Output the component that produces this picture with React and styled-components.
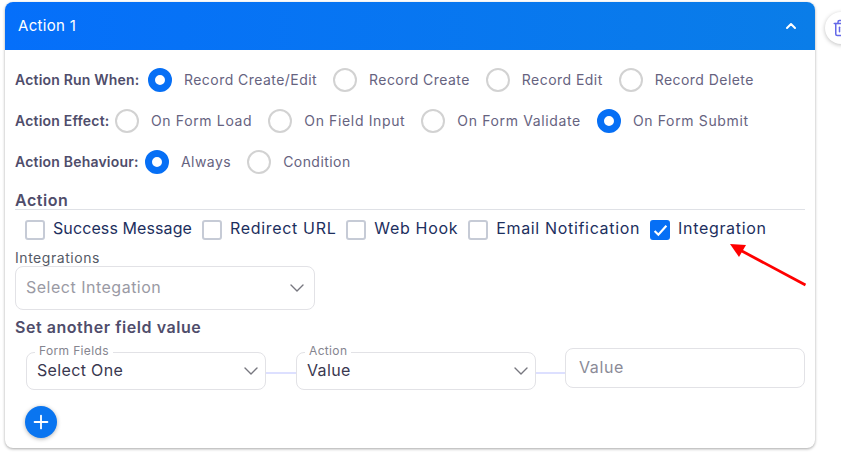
import React from "react";
import styled, { createGlobalStyle } from "styled-components";
import { ChevronDown, ChevronUp, Plus, Trash2 } from "lucide-react";

const Global = createGlobalStyle`
  html, body { margin:0; padding:0; background:#fff; overflow:hidden; }
  body { font-family:Inter, "Open Sans", sans-serif; }
  * { box-sizing:border-box; }
`;

const Page = styled.div`
  width:841px;
  height:453px;
  overflow:hidden;
  padding:2px 0 0 5px;
  display:flex;
  align-items:flex-start;
  gap:10px;
`;

const Card = styled.section`
  position:relative;
  flex:0 0 810px;
  height:446px;
  border-radius:8px;
  background:#fff;
  box-shadow:0 1px 3px rgba(0,0,0,.35);
`;

const CardHead = styled.header`
  height:48px;
  padding:0 16px 1px 13px;
  border-radius:8px 8px 0 0;
  background:linear-gradient(90deg,#056ffa,#0a7de8);
  color:#fff;
  display:flex;
  align-items:center;
  justify-content:space-between;
  font-size:15px;
  letter-spacing:.3px;
`;

const CardBody = styled.div`
  padding:18px 10px 0 10px;
`;

const RadioRow = styled.div`
  height:24px;
  margin-bottom:17px;
  display:flex;
  align-items:center;
  gap:16px;
  letter-spacing:${p => p.$ls}px;
`;

const RowLabel = styled.span`
  width:${p => p.$w}px;
  padding-bottom:2px;
  font-size:14px;
  font-weight:600;
  letter-spacing:.2px;
  color:#4f4d6b;
  white-space:nowrap;
`;

const RadioItem = styled.label`
  display:flex;
  align-items:center;
  gap:12px;
  font-size:14px;
  color:#66637f;
  white-space:nowrap;
`;

const RadioText = styled.span`
  padding-bottom:2px;
`;

const RadioDot = styled.span`
  width:24px;
  height:24px;
  border-radius:50%;
  background:#fff;
  border:${p => (p.$on ? "7px solid #066ff5" : "2px solid #d2d2d2")};
`;

const SectionTitle = styled.h3`
  margin:${p => p.$top}px 0 0;
  font-size:16px;
  font-weight:600;
  line-height:20px;
  letter-spacing:.55px;
  color:#4f4d6b;
`;

const ActionTitle = styled(SectionTitle)`
  border-bottom:1px solid #dfe1e6;
  height:20px;
`;

const CheckRow = styled.div`
  margin-top:10px;
  padding-left:10px;
  display:flex;
  align-items:center;
  gap:10px;
  height:20px;
`;

const CheckItem = styled.label`
  display:flex;
  align-items:center;
  gap:8px;
  font-size:16px;
  letter-spacing:${p => p.$ls ?? 0.67}px;
  color:#1d2f5e;
  white-space:nowrap;
`;

const CheckText = styled.span`
  padding-bottom:4px;
`;

const CheckBox = styled.span`
  width:20px;
  height:20px;
  border-radius:3px;
  border:2px solid ${p => (p.$on ? "#066ff5" : "#c6cbd6")};
  background:${p => (p.$on ? "#066ff5" : "#fff")};
  display:flex;
  align-items:center;
  justify-content:center;
`;

const FieldLabel = styled.div`
  margin-top:10px;
  font-size:14px;
  line-height:16px;
  letter-spacing:.55px;
  color:#555a66;
`;

const SelectBox = styled.div`
  position:relative;
  width:${p => p.$w}px;
  height:${p => p.$h}px;
  padding:0 ${p => p.$pr}px 0 10px;
  border:1px solid #e2e2e6;
  border-radius:8px;
  background:#fff;
  display:flex;
  align-items:center;
  justify-content:space-between;
  font-size:16px;
  letter-spacing:${p => (p.$muted ? 0.5 : 0.35)}px;
  color:${p => (p.$muted ? "#9a9aa4" : "#3a3850")};
  svg { color:#77777f; flex:none; }
`;

const SelectText = styled.span`
  padding-bottom:2px;
`;

const Legend = styled.span`
  position:absolute;
  left:8px;
  top:-9px;
  padding:0 4px;
  background:#fff;
  font-size:12px;
  line-height:14px;
  letter-spacing:.35px;
  color:#85858f;
`;

const FieldRow = styled.div`
  margin-top:15px;
  padding-left:11px;
  display:flex;
  align-items:flex-start;
`;

const Connector = styled.div`
  flex:none;
  width:${p => p.$w}px;
  height:2px;
  margin-top:20px;
  background:#dde0ff;
`;

const ValueInput = styled.input`
  width:240px;
  height:40px;
  padding:0 13px 3px;
  margin-top:-4px;
  border:1px solid #e2e2e6;
  border-radius:8px;
  outline:none;
  font:inherit;
  font-size:16px;
  letter-spacing:.6px;
  color:#3a3850;
  &::placeholder { color:#8b8b97; opacity:1; }
`;

const AddButton = styled.button`
  width:32px;
  height:32px;
  margin:16px 0 0 10px;
  padding:0;
  border:none;
  border-radius:50%;
  background:#0a75f0;
  color:#fff;
  box-shadow:0 1px 4px rgba(0,0,0,.3);
  display:flex;
  align-items:center;
  justify-content:center;
`;

const TrashButton = styled.button`
  flex:0 0 32px;
  width:32px;
  height:32px;
  margin-top:10px;
  padding:0;
  border:none;
  border-radius:50%;
  background:#fff;
  color:#6468e8;
  box-shadow:0 1px 4px rgba(0,0,0,.25);
  display:flex;
  align-items:center;
  justify-content:center;
`;

const Arrow = styled.svg`
  position:absolute;
  left:715px;
  top:236px;
`;

const Radio = ({ on, children }) => (
  <RadioItem><RadioDot $on={on} /><RadioText>{children}</RadioText></RadioItem>
);

const Check = ({ on, ls, children }) => (
  <CheckItem $ls={ls}>
    <CheckBox $on={on}>
      {on && (
        <svg width="15" height="13" viewBox="0 0 14 12" fill="none" stroke="#fff" strokeWidth="2">
          <path d="M1.5 6.5 5 10l7.5-8.5" />
        </svg>
      )}
    </CheckBox>
    <CheckText>{children}</CheckText>
  </CheckItem>
);

const Caret = () => <ChevronDown size={24} strokeWidth={1.4} />;

export default function App() {
  return (
    <Page>
      <Global />
      <Card>
        <CardHead>
          Action 1
          <ChevronUp size={16} strokeWidth={3} />
        </CardHead>
        <CardBody>
          <RadioRow $ls={0.45}>
            <RowLabel $w={117}>Action Run When:</RowLabel>
            <Radio on>Record Create/Edit</Radio>
            <Radio>Record Create</Radio>
            <Radio>Record Edit</Radio>
            <Radio>Record Delete</Radio>
          </RadioRow>
          <RadioRow $ls={0.64}>
            <RowLabel $w={84}>Action Effect:</RowLabel>
            <Radio>On Form Load</Radio>
            <Radio>On Field Input</Radio>
            <Radio>On Form Validate</Radio>
            <Radio on>On Form Submit</Radio>
          </RadioRow>
          <RadioRow $ls={0.45}>
            <RowLabel $w={114}>Action Behaviour:</RowLabel>
            <Radio on>Always</Radio>
            <Radio>Condition</Radio>
          </RadioRow>
          <ActionTitle $top={-1}>Action</ActionTitle>
          <CheckRow>
            <Check ls={0.1}>Success Message</Check>
            <Check>Redirect URL</Check>
            <Check>Web Hook</Check>
            <Check>Email Notification</Check>
            <Check on>Integration</Check>
          </CheckRow>
          <FieldLabel>Integrations</FieldLabel>
          <SelectBox $w={300} $h={44} $pr={5} $muted>
            <SelectText>Select Integation</SelectText>
            <Caret />
          </SelectBox>
          <SectionTitle $top={7}>Set another field value</SectionTitle>
          <FieldRow>
            <SelectBox $w={240} $h={38} $pr={2}>
              <Legend>Form Fields</Legend>
              <SelectText>Select One</SelectText>
              <Caret />
            </SelectBox>
            <Connector $w={30} />
            <SelectBox $w={240} $h={38} $pr={2}>
              <Legend>Action</Legend>
              <SelectText>Value</SelectText>
              <Caret />
            </SelectBox>
            <Connector $w={29} />
            <ValueInput readOnly placeholder="Value" />
          </FieldRow>
          <AddButton><Plus size={22} strokeWidth={2} /></AddButton>
        </CardBody>
        <Arrow width="90" height="52" viewBox="0 0 90 52">
          <path d="M85.5 47 20 12" stroke="#f00" strokeWidth="2.8" />
          <path d="M10 6 26 7 19 19Z" fill="#f00" />
        </Arrow>
      </Card>
      <TrashButton><Trash2 size={18} strokeWidth={2} /></TrashButton>
    </Page>
  );
}
